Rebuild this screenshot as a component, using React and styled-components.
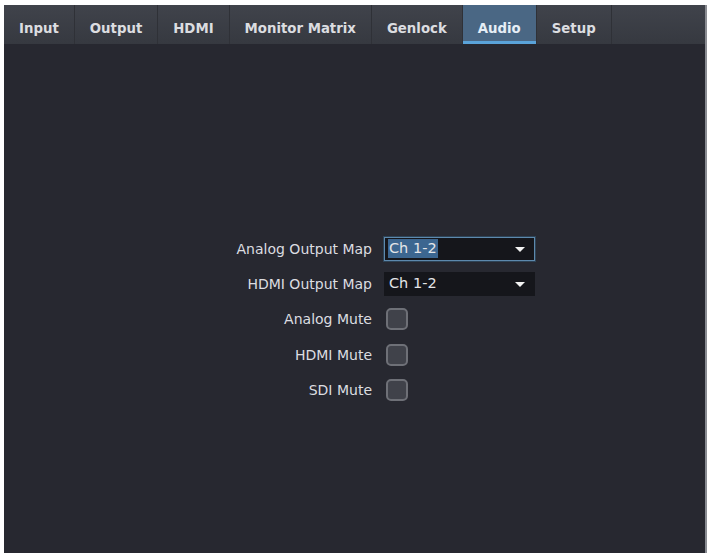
import React, { useState } from "react";
import styled, { createGlobalStyle } from "styled-components";

const GlobalStyle = createGlobalStyle`
  html, body {
    margin: 0;
    padding: 0;
    background: #ffffff;
  }
  body {
    font-family: "DejaVu Sans", "Liberation Sans", sans-serif;
  }
`;

const tabs = ["Input", "Output", "HDMI", "Monitor Matrix", "Genlock", "Audio", "Setup"];

const App = () => {
  const [active, setActive] = useState("Audio");
  const [analogMap, setAnalogMap] = useState("Ch 1-2");
  const [hdmiMap, setHdmiMap] = useState("Ch 1-2");
  const [mutes, setMutes] = useState({ analog: false, hdmi: false, sdi: false });

  const toggle = (key) => setMutes((m) => ({ ...m, [key]: !m[key] }));

  return (
    <>
      <GlobalStyle />
      <Panel>
        <TabBar>
          {tabs.map((t) => (
            <Tab key={t} $active={t === active} onClick={() => setActive(t)}>
              {t}
            </Tab>
          ))}
        </TabBar>
        <Content>
          <Form>
            {/* Analog output map */}
            <Label>Analog Output Map</Label>
            <SelectBox $focused>
              <Value $selected>{analogMap}</Value>
              <Arrow />
              <HiddenSelect value={analogMap} onChange={(e) => setAnalogMap(e.target.value)}>
                <option>Ch 1-2</option>
                <option>Ch 3-4</option>
              </HiddenSelect>
            </SelectBox>

            {/* HDMI output map */}
            <Label>HDMI Output Map</Label>
            <SelectBox>
              <Value>{hdmiMap}</Value>
              <Arrow />
              <HiddenSelect value={hdmiMap} onChange={(e) => setHdmiMap(e.target.value)}>
                <option>Ch 1-2</option>
                <option>Ch 3-4</option>
              </HiddenSelect>
            </SelectBox>

            <Label>Analog Mute</Label>
            <CheckCell>
              <Check $checked={mutes.analog} onClick={() => toggle("analog")} />
            </CheckCell>

            <Label>HDMI Mute</Label>
            <CheckCell>
              <Check $checked={mutes.hdmi} onClick={() => toggle("hdmi")} />
            </CheckCell>

            <Label>SDI Mute</Label>
            <CheckCell>
              <Check $checked={mutes.sdi} onClick={() => toggle("sdi")} />
            </CheckCell>
          </Form>
        </Content>
      </Panel>
    </>
  );
};

const Panel = styled.div`
  margin: 5px 7px 6px 4px;
  height: 548px;
  background: #272830;
  display: flex;
  flex-direction: column;
  border-right: 2px solid #8a8c92;
`;

const TabBar = styled.div`
  height: 39px;
  flex-shrink: 0;
  display: flex;
  align-items: stretch;
  background: linear-gradient(#40434b, #363940);
`;

const Tab = styled.div`
  display: flex;
  align-items: center;
  padding: 8px 15px 0;
  font-size: 13.3px;
  font-weight: bold;
  color: ${(p) => (p.$active ? "#e6eef6" : "#dcdde0")};
  background: ${(p) => (p.$active ? "#4a6784" : "transparent")};
  border-right: 1px solid #2f3137;
  box-shadow: ${(p) => (p.$active ? "inset 0 -3px 0 #5aa3d9" : "none")};
  cursor: default;
  user-select: none;
`;

const Content = styled.div`
  flex: 1;
  padding-top: 187px;
`;

const Form = styled.div`
  display: grid;
  grid-template-columns: 368px 151px;
  grid-auto-rows: 35.3px;
  column-gap: 12px;
  align-items: center;
`;

const Label = styled.div`
  text-align: right;
  font-size: 14px;
  color: #dcdde0;
`;

const SelectBox = styled.div`
  position: relative;
  height: 24px;
  box-sizing: border-box;
  display: flex;
  align-items: center;
  padding: 0 3px;
  background: #15161b;
  border: 1px solid ${(p) => (p.$focused ? "#5d89ad" : "#15161b")};
  box-shadow: ${(p) => (p.$focused ? "0 0 0 1px #2e4356" : "none")};
`;

const Value = styled.span`
  font-size: 14.5px;
  color: #e4e5e8;
  background: ${(p) => (p.$selected ? "#3c6690" : "transparent")};
  padding: 0 1px;
  line-height: 19px;
`;

const Arrow = styled.span`
  position: absolute;
  right: 9px;
  top: 50%;
  margin-top: -2px;
  width: 0;
  height: 0;
  border-left: 5px solid transparent;
  border-right: 5px solid transparent;
  border-top: 5px solid #f2f2f2;
`;

const HiddenSelect = styled.select`
  position: absolute;
  inset: 0;
  opacity: 0;
  cursor: pointer;
`;

const CheckCell = styled.div`
  display: flex;
  align-items: center;
`;

const Check = styled.div`
  width: 22px;
  height: 22px;
  margin-left: 2px;
  box-sizing: border-box;
  border: 2px solid #6e7077;
  border-radius: 5px;
  background: ${(p) => (p.$checked ? "#5a86ad" : "#40424a")};
  cursor: pointer;
`;

export default App;
